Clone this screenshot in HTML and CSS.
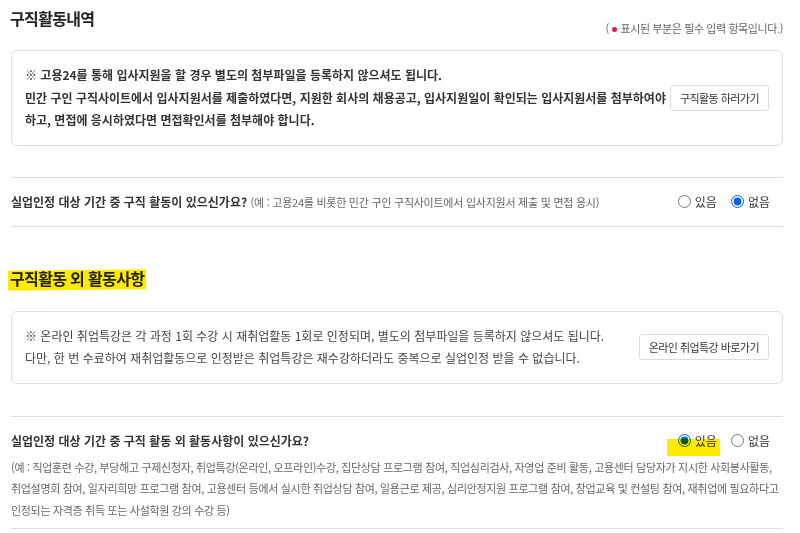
FILE: index.html
```html
<!DOCTYPE html>
<html lang="ko">
<head>
    <meta charset="UTF-8">
    <meta name="viewport" content="width=device-width, initial-scale=1.0">
    <title>구직활동내역</title>
    <link rel="stylesheet" href="styles.css">
</head>
<body>

<div class="wrap">

    <!-- 구직활동내역 -->
    <div class="sec-head">
        <h2 class="sec-title">구직활동내역</h2>
        <p class="req-note">( <span class="req-dot"></span>표시된 부분은 필수 입력 항목입니다.)</p>
    </div>

    <div class="notice notice-strong">
        <p>※ 고용24를 통해 입사지원을 할 경우 별도의 첨부파일을 등록하지 않으셔도 됩니다.<br>
        민간 구인 구직사이트에서 입사지원서를 제출하였다면, 지원한 회사의 채용공고, 입사지원일이 확인되는 입사지원서를 첨부하여야<br>
        하고, 면접에 응시하였다면 면접확인서를 첨부해야 합니다.</p>
        <button type="button" class="btn-link">구직활동 하러가기</button>
    </div>

    <div class="question">
        <div class="q-row">
            <p class="q-text">실업인정 대상 기간 중 구직 활동이 있으신가요? <span class="q-hint">(예 : 고용24를 비롯한 민간 구인 구직사이트에서 입사지원서 제출 및 면접 응시)</span></p>
            <div class="opts">
                <label class="opt"><input type="radio" name="jobAct" value="Y"> 있음</label>
                <label class="opt"><input type="radio" name="jobAct" value="N" checked> 없음</label>
            </div>
        </div>
    </div>

    <!-- 구직활동 외 활동사항 -->
    <h2 class="sec-title sec-title-gap marked">구직활동 외 활동사항</h2>

    <div class="notice notice-sm">
        <p>※ 온라인 취업특강은 각 과정 1회 수강 시 재취업활동 1회로 인정되며, 별도의 첨부파일을 등록하지 않으셔도 됩니다.<br>
        다만, 한 번 수료하여 재취업활동으로 인정받은 취업특강은 재수강하더라도 중복으로 실업인정 받을 수 없습니다.</p>
        <button type="button" class="btn-link">온라인 취업특강 바로가기</button>
    </div>

    <div class="question question-gap">
        <div class="q-row">
            <p class="q-text">실업인정 대상 기간 중 구직 활동 외 활동사항이 있으신가요?</p>
            <div class="opts">
                <label class="opt marked-opt"><input type="radio" name="etcAct" value="Y" checked> 있음</label>
                <label class="opt"><input type="radio" name="etcAct" value="N"> 없음</label>
            </div>
        </div>
        <p class="q-example">(예 : 직업훈련 수강, 부당해고 구제신청자, 취업특강(온라인, 오프라인)수강, 집단상담 프로그램 참여, 직업심리검사, 자영업 준비 활동, 고용센터 담당자가 지시한 사회봉사활동,<br>
        취업설명회 참여, 일자리희망 프로그램 참여, 고용센터 등에서 실시한 취업상담 참여, 일용근로 제공, 심리안정지원 프로그램 참여, 창업교육 및 컨설팅 참여, 재취업에 필요하다고<br>
        인정되는 자격증 취득 또는 사설학원 강의 수강 등)</p>
    </div>

</div>

</body>
</html>
```

FILE: styles.css
```css
* {
    box-sizing: border-box;
}
body {
    margin: 0;
    font-family: "Noto Sans CJK KR", "Noto Sans", sans-serif;
    color: #333;
    background: #fff;
}
.wrap {
    width: 772px;
    margin-left: 11px;
    padding-top: 6px;
}

/* section heads */
.sec-head {
    display: flex;
    justify-content: space-between;
    align-items: flex-start;
}
.sec-title {
    margin: 0 0 0 -1px;
    font-size: 16px;
    line-height: 24px;
    font-weight: 700;
    letter-spacing: -0.65px;
    color: #222;
}
.sec-title-gap {
    margin-top: 39px;
}
.req-note {
    margin: 14px 0 0;
    font-size: 11px;
    line-height: 16px;
    letter-spacing: -0.4px;
    color: #666;
}
.req-dot {
    display: inline-block;
    width: 5px;
    height: 5px;
    margin: 0 3px 2px 1px;
    border-radius: 50%;
    background: #e5174f;
    vertical-align: middle;
}

/* notice boxes */
.notice {
    display: flex;
    align-items: center;
    justify-content: space-between;
    margin-top: 14px;
    padding: 13px 13px 13px 13px;
    border: 1px solid #ddd;
    border-radius: 6px;
}
.notice-sm {
    margin-top: 21px;
}
.notice p {
    margin: 0;
    font-size: 12px;
    line-height: 22.5px;
    color: #444;
}
.notice-strong p {
    font-weight: 600;
    color: #333;
}
.btn-link {
    flex-shrink: 0;
    padding: 4px 9px;
    border: 1px solid #ddd;
    border-radius: 3px;
    background: #fff;
    font-family: inherit;
    font-size: 11px;
    line-height: 16px;
    letter-spacing: -0.55px;
    color: #333;
}

/* questions */
.question {
    margin-top: 31px;
    padding: 12px 0;
    border-top: 1px solid #ddd;
    border-bottom: 1px solid #ddd;
}
.question-gap {
    margin-top: 32px;
    padding-bottom: 7px;
}
.q-row {
    display: flex;
    justify-content: space-between;
    align-items: center;
}
.q-text {
    margin: 0;
    font-size: 12px;
    line-height: 24px;
    font-weight: 700;
    color: #333;
}
.q-hint {
    font-size: 11px;
    font-weight: 400;
    letter-spacing: -0.25px;
    color: #666;
}
.q-example {
    margin: 4px 0 0;
    font-size: 11px;
    line-height: 21.5px;
    letter-spacing: -0.32px;
    color: #666;
}
.opts {
    display: flex;
    gap: 14px;
    padding-right: 13px;
}
.opt {
    display: flex;
    align-items: center;
    gap: 4px;
    font-size: 12px;
    line-height: 24px;
    color: #333;
}
.opt input {
    width: 13px;
    height: 13px;
    margin: 0;
    accent-color: #0b62e3;
}

/* yellow marker strokes */
.marked {
    position: relative;
    width: fit-content;
}
.marked::after {
    content: "";
    position: absolute;
    left: -2px;
    right: -2px;
    top: 4px;
    bottom: 0;
    background: #ffea00;
    mix-blend-mode: multiply;
    transform: rotate(-0.6deg);
}
.marked-opt {
    position: relative;
}
.marked-opt::after {
    content: "";
    position: absolute;
    left: -11px;
    right: -3px;
    top: 10px;
    bottom: -3px;
    background: #ffea00;
    mix-blend-mode: multiply;
}
```
